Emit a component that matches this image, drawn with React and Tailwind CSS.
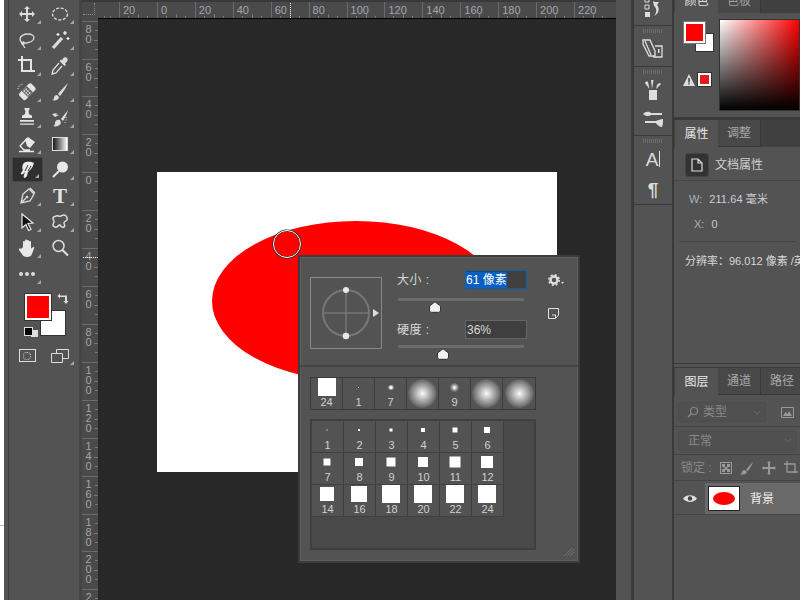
const FONT = { fontFamily: '"Liberation Sans","Noto Sans CJK SC",sans-serif' };

const Svg = ({ w = 20, h = 20, vb, children, className = "" }) => (
  <svg width={w} height={h} viewBox={vb || `0 0 ${w} ${h}`} className={className}>{children}</svg>
);

const icons = {
  move: <Svg><path fill="#dcdcdc" d="M10 2l3 3h-2v4h4V7l3 3-3 3v-2h-4v4h2l-3 3-3-3h2v-4H5v2l-3-3 3-3v2h4V5H7z" /></Svg>,
  marquee: <Svg><ellipse cx="10" cy="10" rx="7.5" ry="6" fill="none" stroke="#dcdcdc" strokeWidth="1.3" strokeDasharray="3 1.6" /></Svg>,
  lasso: <Svg><path fill="none" stroke="#dcdcdc" strokeWidth="1.3" d="M3 9c0-3 4-5 8-5s6 2 6 3.500c0 3-4 5-8 5.500-2 .2-6 0-6-4zM5 12c-1 2 1 3 2 2s0-2-1-2M6 15l2 3" /></Svg>,
  wand: <Svg><path stroke="#dcdcdc" strokeWidth="3.200" d="M3 18L12 8" /><path stroke="#fff" strokeWidth="1.200" d="M15 1v4M13 3h4M18 7v3M16.500 8.500h3M8 3v3M6.500 4.500h3" /></Svg>,
  crop: <Svg><path fill="none" stroke="#e4e4e4" strokeWidth="2" d="M1 4h13v12M5 0v15h13" /></Svg>,
  dropper: <Svg><path fill="#dcdcdc" d="M13 2.500c1-1.500 3-1.500 4-.5s1 3-.5 4l-1.500 1.500 1 1-1.500 1.500-5-5L11 3.500l1 1z" /><path fill="none" stroke="#dcdcdc" strokeWidth="1.300" d="M9 7L3 14l-1 4 4-1 6-7" /></Svg>,
  heal: <Svg><g transform="rotate(-45 10 10)"><rect x="2" y="5.500" width="17" height="9" rx="2" fill="#e4e4e4" /><rect x="7" y="5.500" width="7" height="9" fill="#666" /><path stroke="#e4e4e4" strokeWidth="1.500" strokeDasharray="1.500 1" d="M8 7.500h5M8 10h5M8 12.500h5" /></g><path fill="none" stroke="#e4e4e4" strokeDasharray="1 1" d="M1 7c0-3 3-5 5-5" /></Svg>,
  brush: <Svg><path fill="#dcdcdc" d="M18 1c-3 3-7 7-10 11l2 2c3-4 6-8 8-13zM7 13c-2 0-3 1-3 3 0 1-1 2-2 2 3 1 7 0 7-3z" /></Svg>,
  stamp: <Svg><path fill="#e4e4e4" d="M8 2a2.500 2.500 0 1 1 4 0c-.4.6-.5 1.500-.2 3 .2 1 .7 2 3.200 2.500V10H5V7.500C7.500 7 8 6 8.200 5c.3-1.500.2-2.400-.2-3zM3 12h14v1.800H3zM3 15.500h14v1.200H3z" /></Svg>,
  history: <Svg><path fill="#dcdcdc" d="M18 2c-2 3-5 6-7 9l2 2c2-3 4-7 5-11zM10 12c-3-1-5 1-5 3 0 2-1 3-2 3 3 1 7 0 8-3z" /><path fill="#dcdcdc" d="M2 6l5-1-1 1.500 3 .5-4 2z" /><path stroke="#dcdcdc" strokeDasharray="1 1.500" fill="none" d="M16 9c1 3-1 6-2 7" /></Svg>,
  eraser: <Svg><path fill="#e8e8e8" d="M11 3l7 5-5 6-3-2L8 6z" /><path fill="none" stroke="#e8e8e8" strokeWidth="1.300" d="M10.500 4L3 12l4 4h6M2 17.500h15" /></Svg>,
  gradient: <div className="w-[16px] h-[14px] border border-[#ddd] bg-gradient-to-r from-[#1c1c1c] to-[#fff]" />,
  smudge: <Svg><path fill="#ececec" d="M7 3c3-2 8-1 10 0-1 2-1 4-3 6l-3 3-1 4-2 2c-1 0-2-1-1-3l1-3-2 2c-1 1-3 0-2-1l2-3C5 9 5 5 7 3z" /><path stroke="#333" strokeWidth="1" d="M11 5l-3 6M14 6l-3 5" /></Svg>,
  dodge: <Svg><circle cx="12.500" cy="7" r="5.500" fill="#e8e8e8" /><path stroke="#e8e8e8" strokeWidth="2" d="M9 11l-6 6" /></Svg>,
  pen: <Svg><path fill="none" stroke="#dcdcdc" strokeWidth="1.300" d="M12 3l5 5-4 7-9 2 2-9zM4 17l5-5M13 2l5 5" /><circle cx="10" cy="11" r="1.300" fill="#dcdcdc" /></Svg>,
  arrow: <Svg><path fill="#111" stroke="#e8e8e8" strokeWidth="1.200" d="M5 2l11 9-5 .5 3 6-2.500 1-2.500-6L5 16z" /></Svg>,
  blob: <Svg><path fill="none" stroke="#dcdcdc" strokeWidth="1.500" d="M6 4c2-1 3 1 5 0s3-2 5 0 1 3 1 4-3 1-3 3 2 3 0 4-3-1-4-2-2 3-5 2-2-3-1-5-2-2-1-4 2-1 3-2z" /></Svg>,
  hand: <Svg><path fill="#e8e8e8" d="M6 9V4c0-1.500 2-1.500 2 0V2.500c0-1.500 2-1.500 2 0V3c0-1.500 2-1.500 2 0v1c0-1.500 2-1.500 2 0v7c.5-1 1.500-2 2.500-2s1 1 .5 1.500L15 16c-1 2-2 3-5 3-3 0-4-1-5-3l-3-4c-.5-1 1-2 2-1z" /></Svg>,
  zoom: <Svg><circle cx="8.500" cy="8" r="5.500" fill="none" stroke="#dcdcdc" strokeWidth="1.500" /><path stroke="#dcdcdc" strokeWidth="2.200" d="M12.500 12l5.500 5.500" /></Svg>,
  dots: <div className="flex gap-[2px]"><span className="w-[4px] h-[4px] rounded-full bg-[#dcdcdc]" /><span className="w-[4px] h-[4px] rounded-full bg-[#dcdcdc]" /><span className="w-[4px] h-[4px] rounded-full bg-[#dcdcdc]" /></div>,
};

const tools = [
  ["move", 1], ["marquee", 1], ["lasso", 1], ["wand", 1], ["crop", 1], ["dropper", 1],
  ["heal", 1], ["brush", 1], ["stamp", 1], ["history", 1], ["eraser", 1], ["gradient", 1],
  ["smudge", 1], ["dodge", 1], ["pen", 1], ["text", 1], ["arrow", 1], ["blob", 1],
  ["hand", 1], ["zoom", 0], ["dots", 1], ["", 0],
];

function Corner() {
  return <span className="absolute right-[3px] bottom-[3px] w-0 h-0 border-l-[4px] border-l-transparent border-b-[4px] border-b-[#a8a8a8]" />;
}

function Toolbar() {
  return (
    <div className="w-[70px] h-full bg-[#535353] pt-[1px] pl-[1.5px] shrink-0">
      <div className="grid grid-cols-[33px_33px] auto-rows-[26px]">
        {tools.map(([n, c], i) => (
          <div key={i} className={`relative flex items-center justify-center ${n === "smudge" ? "bg-[#2f2f2f] border border-[#444] rounded-[2px] mx-[1px] h-[25px]" : ""}`}>
            {n === "text" ? <span className="text-[21px] leading-none font-bold text-[#e4e4e4]" style={{ fontFamily: '"Liberation Serif",serif' }}>T</span> : icons[n]}
            {c ? <Corner /> : null}
          </div>
        ))}
      </div>
      <div className="relative h-[62px]">
        <div className="absolute left-[29.5px] top-[23px] w-[26px] h-[26px] bg-white border border-[#333]" />
        <div className="absolute left-[14.5px] top-[7px] w-[26px] h-[26px] bg-[#ff0000] border-2 border-white outline outline-1 outline-[#333]" />
        <svg width="12" height="12" viewBox="0 0 12 12" className="absolute left-[46px] top-[6px]">
          <path d="M3 .5L.5 3 3 5.500V4h5v4H6.500L9 11l2.500-3H10V2.500H3z" fill="#dcdcdc" />
        </svg>
        <div className="absolute left-[20px] top-[43px] w-[7px] h-[7px] bg-[#ddd]" />
        <div className="absolute left-[13.5px] top-[40px] w-[7px] h-[7px] bg-black border border-[#ddd] box-content" />
      </div>
      <div className="grid grid-cols-[33px_33px] h-[14px]">
        <div className="flex justify-center">
          <div className="w-[17px] h-[13px] border border-[#ddd] flex items-center justify-center">
            <div className="w-[8px] h-[8px] rounded-full border border-dotted border-[#ddd]" />
          </div>
        </div>
        <div className="relative flex justify-center">
          <svg width="18" height="14" viewBox="0 0 18 14">
            <path d="M.5 4.500h11v9H.5zM5.500 4.500V.5h12v9h-6" fill="none" stroke="#ddd" />
          </svg>
          <span className="absolute right-[3px] bottom-[-2px] w-0 h-0 border-l-[4px] border-l-transparent border-b-[4px] border-b-[#a8a8a8]" />
        </div>
      </div>
    </div>
  );
}

const majors = ["20", "0", "20", "40", "60", "80", "100", "120", "140", "160", "180", "200", "220"];
const vLabels = ["80", "60", "40", "20", "0", "20", "40", "60", "80", "100", "120", "140", "160", "180", "200", "220"];

function TopRuler() {
  return (
    <div className="relative flex-1 h-[16px] bg-[#4a4a4a] overflow-hidden">
      {majors.map((t, i) => {
        const x = 21 + i * 37.92;
        return (
          <div key={i} className="absolute top-0 h-full" style={{ left: x }}>
            <span className="absolute left-0 top-0 w-[1px] h-full bg-[#6b6b6b]" />
            <span className="absolute left-[4px] top-[2px] text-[11px] leading-[13px] text-[#a0a6ac]">{t}</span>
            <span className="absolute left-[9px] bottom-0 w-[1px] h-[2px] bg-[#777]" />
            <span className="absolute left-[19px] bottom-0 w-[1px] h-[4px] bg-[#777]" />
            <span className="absolute left-[28px] bottom-0 w-[1px] h-[2px] bg-[#777]" />
          </div>
        );
      })}
      <span className="absolute left-[6px] bottom-0 w-[1px] h-[2px] bg-[#777]" />
      <span className="absolute left-[12px] bottom-0 w-[1px] h-[2px] bg-[#777]" />
      <span className="absolute left-[192px] top-[1px] h-[15px] border-l border-dotted border-white" />
    </div>
  );
}

function LeftRuler() {
  return (
    <div className="relative w-[16px] h-full bg-[#4a4a4a] overflow-hidden shrink-0">
      {vLabels.map((t, i) => {
        const y = 1.6 + i * 37.92;
        return (
          <div key={i} className="absolute left-0 w-full" style={{ top: y }}>
            <span className="absolute left-0 top-0 h-[1px] w-full bg-[#6b6b6b]" />
            <div className="absolute left-[3px] top-[3px] w-[7px] break-all text-center text-[11px] leading-[10px] text-[#a0a6ac]">{t}</div>
            <span className="absolute right-0 top-[9px] h-[1px] w-[3px] bg-[#777]" />
            <span className="absolute right-0 top-[19px] h-[1px] w-[4px] bg-[#777]" />
            <span className="absolute right-0 top-[28px] h-[1px] w-[3px] bg-[#777]" />
          </div>
        );
      })}
      <span className="absolute left-[1px] top-[238px] w-[15px] border-t border-dotted border-white" />
    </div>
  );
}

function Thumb() {
  return (
    <svg width="14" height="12" viewBox="0 0 14 12" className="absolute top-[3px]">
      <path d="M7 .8L12.500 5v4c0 1.500-1 2.300-2 2.300h-7c-1 0-2-.8-2-2.300V5z" fill="#f2f2f2" stroke="#333" strokeWidth="1" />
    </svg>
  );
}

const softCell = "mt-[1px] w-[29px] h-[29px] rounded-full bg-[radial-gradient(circle_closest-side,#ffffff_0%,#e6e6e6_12%,#b4b4b4_45%,#767676_85%,#5c5c5c_100%)]";

function Popup() {
  const row1 = [
    ["sq", "24"], ["dot", "1"], ["s7", "7"], ["soft", ""], ["s9", "9"], ["soft", ""], ["soft", ""],
  ];
  const sizes = [
    [1, 1], [2, 2], [3, 3], [4, 4], [5, 5], [6, 6], [7, 7], [8, 8], [9, 9], [10, 10], [11, 11], [12, 12],
    [14, 14], [16, 16], [18, 18], [20, 18], [22, 18], [24, 18],
  ];
  return (
    <div className="absolute left-[200px] top-[236px] w-[282px] h-[308px] bg-[#535353] border-2 border-[#3c3c3c] shadow-[0_0_0_1px_#5e5e5e_inset] flex flex-col text-[#d8d8d8]">
      <div className="flex h-[110px] shrink-0 pl-[10px] pt-[13px] border-b-2 border-[#444]">
        <div className="relative w-[72px] h-[72px] mt-[7px] border border-[#888] shrink-0">
          <svg width="70" height="70" viewBox="0 0 70 70">
            <circle cx="35" cy="35" r="23" fill="none" stroke="#777" strokeWidth="2" />
            <path d="M35 12v46M12 35h46" stroke="#777" strokeWidth="1.500" />
            <circle cx="35" cy="12" r="3" fill="#e8e8e8" />
            <circle cx="35" cy="58" r="3.300" fill="#e8e8e8" />
            <path d="M62 31l6 4-6 4z" fill="#ddd" />
          </svg>
        </div>
        <div className="w-[130px] ml-[15px] shrink-0">
          <div className="flex items-center h-[19px] justify-between">
            <span className="text-[12px] tracking-[0.5px]">大小 :</span>
            <div className="w-[62px] h-[19px] border border-[#0d5cb8] bg-[#404040] flex items-center">
              <span className="bg-[#0a5fc4] text-white text-[12px] leading-[16px]">61 像素</span>
            </div>
          </div>
          <div className="relative h-[3px] w-[126px] ml-[1px] mt-[9px] bg-[#6c6c6c]"><div className="absolute left-[30px]"><Thumb /></div></div>
          <div className="flex items-center h-[19px] justify-between mt-[19px]">
            <span className="text-[12px] tracking-[0.5px]">硬度 :</span>
            <div className="w-[62px] h-[19px] border border-[#666] bg-[#3f3f3f] pl-[1px] flex items-center">
              <span className="text-[12px] leading-[16px]">36%</span>
            </div>
          </div>
          <div className="relative h-[3px] w-[126px] ml-[1px] mt-[6px] bg-[#6c6c6c]"><div className="absolute left-[38px]"><Thumb /></div></div>
        </div>
        <div className="ml-[21px] pt-[4px] flex flex-col gap-[22px]">
          <svg width="16" height="12" viewBox="0 0 16 12">
            <circle cx="6" cy="6" r="3.500" fill="none" stroke="#ddd" strokeWidth="2.500" />
            <circle cx="6" cy="6" r="5.200" fill="none" stroke="#ddd" strokeWidth="1.600" strokeDasharray="2 2.100" />
            <path d="M13 8h3l-1.500 2z" fill="#ddd" />
          </svg>
          <svg width="11" height="11" viewBox="0 0 11 11">
            <path d="M.5.500h10v6.500l-3 3.500h-7z" fill="none" stroke="#e0e0e0" />
            <path d="M4 7h3.500v3" fill="none" stroke="#e0e0e0" />
          </svg>
        </div>
      </div>
      <div className="mt-[10px] ml-[10px] w-[226px] h-[33px] shrink-0 border border-[#3a3a3a] flex">
        {row1.map(([k, l], i) => (
          <div key={i} className="relative w-[32px] h-full border-r border-[#3e3e3e] last:border-r-0 flex justify-center overflow-hidden">
            {k === "sq" && <div className="w-[18px] h-[18px] bg-white" />}
            {k === "dot" && <div className="mt-[9px] w-[1px] h-[1px] bg-white" />}
            {k === "s7" && <div className="mt-[7px] w-[6px] h-[5px] rounded-full bg-[radial-gradient(circle_closest-side,#ffffff_30%,#888_100%)]" />}
            {k === "s9" && <div className="mt-[5px] w-[9px] h-[9px] rounded-full bg-[radial-gradient(circle_closest-side,#ffffff_10%,#999_60%,#666_100%)]" />}
            {k === "soft" && <div className={softCell} />}
            {l && <span className="absolute bottom-[0px] left-0 right-0 text-center text-[11px] leading-[13px] text-[#d0d0d0]">{l}</span>}
          </div>
        ))}
      </div>
      <div className="mt-[9px] ml-[10px] w-[226px] h-[131px] shrink-0 border-2 border-[#3f3f3f] bg-[#4a4a4a]">
        <div className="grid grid-cols-[32px_32px_32px_32px_32px_32px] auto-rows-[32px]">
          {sizes.map(([l, s], i) => (
            <div key={i} className="relative bg-[#535353] border-r border-b border-[#3f3f3f]">
              <div className="absolute left-[15px] top-[9px] -translate-x-1/2 -translate-y-1/2 bg-white" style={{ width: s, height: s }} />
              <span className="absolute bottom-[0px] left-0 right-0 text-center text-[11px] leading-[14px] text-[#d0d0d0]">{l}</span>
            </div>
          ))}
        </div>
      </div>
      <svg width="12" height="10" viewBox="0 0 12 10" className="absolute right-[3px] bottom-[4px]">
        <path d="M1 9l8-8M4 9l7-7M7 9l4-4" stroke="#6e6e6e" />
      </svg>
    </div>
  );
}

function DockGroup({ h, children, grip = true }) {
  return (
    <div className="border-b border-[#3a3a3a] flex flex-col items-center shrink-0" style={{ height: h }}>
      {grip && <div className="w-[20px] h-[4px] mt-[3px] bg-[repeating-linear-gradient(90deg,#6c6c6c_0,#6c6c6c_1px,transparent_1px,transparent_2px)]" />}
      {children}
    </div>
  );
}

function Dock() {
  return (
    <div className="w-[38px] h-full bg-[#535353] shrink-0 flex flex-col">
      <DockGroup h={26} grip={false}>
        <svg width="18" height="18" viewBox="0 0 18 18">
          <path d="M1 -1h4v3H1zM1 5h4v4H1z" fill="none" stroke="#ddd" />
          <rect x="1" y="12" width="5" height="5" fill="#ddd" />
          <path d="M9 1l2 1h4l-2 3c3 3 2 9-3 11 3-3 3-8 0-10z" fill="#ddd" />
        </svg>
      </DockGroup>
      <DockGroup h={41}>
        <svg width="22" height="22" viewBox="0 0 22 22" className="mt-[5px]">
          <path d="M1 2h7l5 11v5H7L1 6z" fill="none" stroke="#ddd" strokeWidth="1.300" />
          <path d="M3 3l6 14M13 8h7v11h-9" fill="none" stroke="#ddd" strokeWidth="1.300" />
          <rect x="16" y="11" width="1.500" height="4" fill="#ddd" />
        </svg>
      </DockGroup>
      <DockGroup h={69}>
        <svg width="18" height="22" viewBox="0 0 18 22" className="mt-[4px]">
          <rect x="5" y="12" width="8" height="10" fill="#ddd" />
          <path d="M8 11L7 2h2.500zM5.500 11L1 5c0-1 2-2 3-1zM12 11l1-4c1-2 4-2 4-1z" fill="#ddd" />
        </svg>
        <svg width="20" height="16" viewBox="0 0 20 16" className="mt-[11px]">
          <path d="M0 3c2-2.500 6-3 8-1h11v2H8C6 6 2 5 0 3zM20 8c0 3 0 6-1 8-2 0-5-2-6-4H2v-2h11c2-1 5-2 7-2z" fill="#ddd" />
        </svg>
      </DockGroup>
      <DockGroup h={69}>
        <div className="flex items-center h-[20px] mt-[6px] text-[#dcdcdc] text-[19px] leading-none">A<span className="w-[1px] h-[16px] bg-[#ddd] ml-[1px]" /></div>
        <div className="text-[#dcdcdc] text-[19px] leading-none font-bold mt-[11px]">¶</div>
      </DockGroup>
    </div>
  );
}

function Tabs({ items, h }) {
  return (
    <div className="flex bg-[#404040] shrink-0 pl-[1px]" style={{ height: h }}>
      {items.map((t, i) => (
        <div key={t} className={`w-[43px] shrink-0 flex items-center justify-center text-[12px] ${i === 0 ? "bg-[#535353] text-[#e8e8e8]" : "bg-[#484848] text-[#a8a8a8] border-r border-b border-[#383838]"}`}>{t}</div>
      ))}
    </div>
  );
}

function Panels() {
  return (
    <div className="flex-1 h-full flex flex-col overflow-hidden bg-[#535353]">
      <div className="h-[13px] shrink-0 overflow-hidden flex bg-[#404040] pl-[1px]">
        <div className="w-[43px] h-[13px] bg-[#535353] text-[12px] leading-[3px] text-center text-[#e0e0e0]">颜色</div>
        <div className="w-[43px] h-[13px] bg-[#484848] text-[12px] leading-[3px] text-center text-[#a0a0a0] border-r border-[#383838]">色板</div>
      </div>
      <div className="h-[104px] shrink-0 flex pt-[6px] pl-[9px]">
        <div className="w-[35px] shrink-0">
          <div className="relative h-[33px]">
            <div className="absolute left-[12px] top-[14px] w-[19px] h-[19px] bg-white border border-[#333]" />
            <div className="absolute left-[1px] top-[3px] w-[21px] h-[21px] bg-[#ff0000] border-2 border-white outline outline-1 outline-[#777]" />
          </div>
          <div className="flex items-center mt-[21px] gap-[3px]">
            <svg width="12" height="12" viewBox="0 0 12 12"><path d="M6 0l6 12H0z" fill="#ddd" /><path d="M5.300 4h1.400v4.500H5.300zM5.300 9.300h1.400v1.300H5.300z" fill="#333" /></svg>
            <div className="w-[13px] h-[13px] bg-[#e21c1c] border-2 border-white outline outline-1 outline-[#333]" />
          </div>
        </div>
        <div className="w-[81px] h-[92px] ml-[1px] border border-[#333] bg-[linear-gradient(to_top,#000,transparent),linear-gradient(to_right,#fff,#ff0000)]" />
      </div>
      <div className="h-[3px] shrink-0 bg-[#3a3a3a]" />
      <Tabs items={["属性", "调整"]} h={27} />
      <div className="h-[216px] shrink-0 flex flex-col text-[#d0d0d0]">
        <div className="h-[34px] shrink-0 border-b border-[#444] flex items-center pl-[11px] pt-[2px] gap-[6px]">
          <div className="w-[24px] h-[24px] bg-[#333] border border-[#444] rounded-[3px] flex items-center justify-center">
            <svg width="12" height="14" viewBox="0 0 12 14"><path d="M1 1h6l4 4v8H1zM7 1v4h4" fill="none" stroke="#ddd" strokeWidth="1.200" /></svg>
          </div>
          <span className="text-[12px]">文档属性</span>
        </div>
        <div className="h-[61px] shrink-0 mx-[5px] border-b border-[#444] text-[11px] pt-[9px]">
          <div className="flex h-[18px] items-center pl-[10px]"><span className="text-[#a7b2bd]">W:</span><span className="ml-[7px] text-[#c8ced6] tracking-[0.1px]">211.64 毫米</span></div>
          <div className="flex h-[18px] items-center pl-[15px] mt-[7px]"><span className="text-[#a7b2bd]">X:</span><span className="ml-[7px] text-[#c8ced6]">0</span></div>
        </div>
        <div className="pl-[11px] pt-[11px] text-[11px] whitespace-nowrap text-[#d8d8d8]">分辨率：96.012 像素 /英寸</div>
      </div>
      <div className="h-[5px] shrink-0 bg-[#535353] border-y border-[#3a3a3a]" />
      <Tabs items={["图层", "通道", "路径"]} h={27} />
      <div className="h-[32px] shrink-0 border-b border-[#444] flex items-center pl-[4px] pt-[3px]">
        <div className="w-[88px] h-[20px] border border-[#4c4c4c] rounded-[3px] flex items-center pl-[8px] text-[12px] text-[#8a8a8a] bg-[#505050]">
          <svg width="12" height="12" viewBox="0 0 12 12"><circle cx="7" cy="5" r="3.500" fill="none" stroke="#888" strokeWidth="1.200" /><path d="M4.500 7.500L1 11" stroke="#888" strokeWidth="1.500" /></svg>
          <span className="ml-[4px]">类型</span>
          <svg width="8" height="5" viewBox="0 0 8 5" className="ml-auto mr-[4px]"><path d="M1 1l3 3 3-3" fill="none" stroke="#6a6a6a" /></svg>
        </div>
        <svg width="13" height="11" viewBox="0 0 13 11" className="ml-[15px]"><path d="M.5.500h12v10H.5z" fill="none" stroke="#999" /><path d="M2 9l2.500-4 2 2L8 4l3 5z" fill="#999" /></svg>
      </div>
      <div className="h-[28px] shrink-0 border-b border-[#444] flex items-center pl-[4px]">
        <div className="w-[119px] h-[20px] border border-[#4c4c4c] rounded-[3px] flex items-center pl-[9px] text-[12px] text-[#8a8a8a] bg-[#505050]">
          <span>正常</span>
          <svg width="8" height="5" viewBox="0 0 8 5" className="ml-auto mr-[4px]"><path d="M1 1l3 3 3-3" fill="none" stroke="#6a6a6a" /></svg>
        </div>
      </div>
      <div className="h-[26px] shrink-0 border-b border-[#444] flex items-center pl-[7px] text-[12px] text-[#8a8a8a] whitespace-nowrap">
        <span>锁定 :</span>
        <svg width="12" height="12" viewBox="0 0 12 12" className="ml-[8px] shrink-0"><rect x=".5" y=".5" width="11" height="11" fill="none" stroke="#999" /><path d="M2 2h3v3H2zM7 2h3v3H7zM4.500 5h3v3h-3zM2 7h3v3H2zM7 7h3v3H7z" fill="#999" /></svg>
        <svg width="14" height="14" viewBox="0 0 14 14" className="ml-[8px] shrink-0"><path d="M13 1c-2 2-5 5-7 8l2 1c2-3 4-6 5-9zM5 9c-2 0-3 1-3 2s-1 2-2 2c2 1 6 1 7-2z" fill="#999" /></svg>
        <svg width="14" height="14" viewBox="0 0 14 14" className="ml-[8px] shrink-0"><path d="M7 0l2 2H8v4h4V5l2 2-2 2V8H8v4h1l-2 2-2-2h1V8H2v1L0 7l2-2v1h4V2H5z" fill="#999" /></svg>
        <svg width="14" height="14" viewBox="0 0 14 14" className="ml-[8px] shrink-0"><path d="M0 3h11v9M3 0v11h11" fill="none" stroke="#999" strokeWidth="1.300" /></svg>
      </div>
      <div className="h-[32px] shrink-0 border-b border-[#444] flex mt-[2px]">
        <div className="w-[31px] flex items-center justify-center shrink-0">
          <svg width="14" height="9" viewBox="0 0 14 9"><path d="M0 4.500C3 0 11 0 14 4.500 11 9 3 9 0 4.500z" fill="#e0e0e0" /><circle cx="7" cy="4.500" r="2.200" fill="#444" /></svg>
        </div>
        <div className="flex-1 bg-[#696969] flex items-center pl-[3px]">
          <div className="w-[32px] h-[25px] bg-white border border-[#222] flex items-center justify-center shrink-0">
            <div className="w-[22px] h-[13px] rounded-[50%] bg-[#ff0000]" />
          </div>
          <span className="ml-[10px] text-[12px] text-[#f0f0f0]">背景</span>
        </div>
      </div>
    </div>
  );
}

export default function App() {
  return (
    <div className="relative flex w-[800px] h-[600px] overflow-hidden bg-[#535353]" style={FONT}>
      <div className="relative w-[4px] h-full bg-white shrink-0">
        <span className="absolute left-0 top-[525px] w-full h-[1px] bg-[#bbb]" />
      </div>
      <div className="w-[5px] h-full bg-[#535353] border-r border-[#3f3f3f] shrink-0" />
      <Toolbar />
      <div className="w-[3px] h-full bg-[#444] shrink-0" />
      <div className="w-[534px] h-full flex flex-col shrink-0">
        <div className="h-[2px] shrink-0 bg-[#3a3a3a]" />
        <div className="flex h-[16px] shrink-0">
          <div className="relative w-[16px] h-full bg-[#4a4a4a] shrink-0">
            <span className="absolute left-[1px] right-[3px] top-[12px] border-t border-dotted border-[#888]" />
            <span className="absolute right-[3px] top-[1px] bottom-[3px] border-l border-dotted border-[#888]" />
          </div>
          <TopRuler />
        </div>
        <div className="h-[1px] shrink-0 flex"><div className="w-[16px] bg-[#4a4a4a]" /><div className="flex-1 bg-black" /></div>
        <div className="flex flex-1 min-h-0">
          <LeftRuler />
          <div className="relative flex-1 bg-[#282828] overflow-hidden pl-[59px] pt-[153px]">
            <div className="relative w-[400px] h-[300px] bg-white">
              <svg width="400" height="300" viewBox="0 0 400 300" className="absolute left-0 top-0">
                <ellipse cx="199" cy="129" rx="144" ry="80" fill="#ff0000" />
                <circle cx="130" cy="72" r="13.500" fill="none" stroke="#222" strokeWidth="2" />
                <circle cx="130" cy="72" r="13.500" fill="none" stroke="#fff" strokeWidth="1" />
              </svg>
            </div>
            <Popup />
          </div>
        </div>
      </div>
      <div className="w-[16px] h-full bg-[#535353] border-r border-[#3f3f3f] shrink-0" />
      <div className="w-[2px] h-full bg-[#3a3a3a] shrink-0" />
      <Dock />
      <div className="w-[2px] h-full bg-[#3a3a3a] shrink-0" />
      <Panels />
    </div>
  );
}
